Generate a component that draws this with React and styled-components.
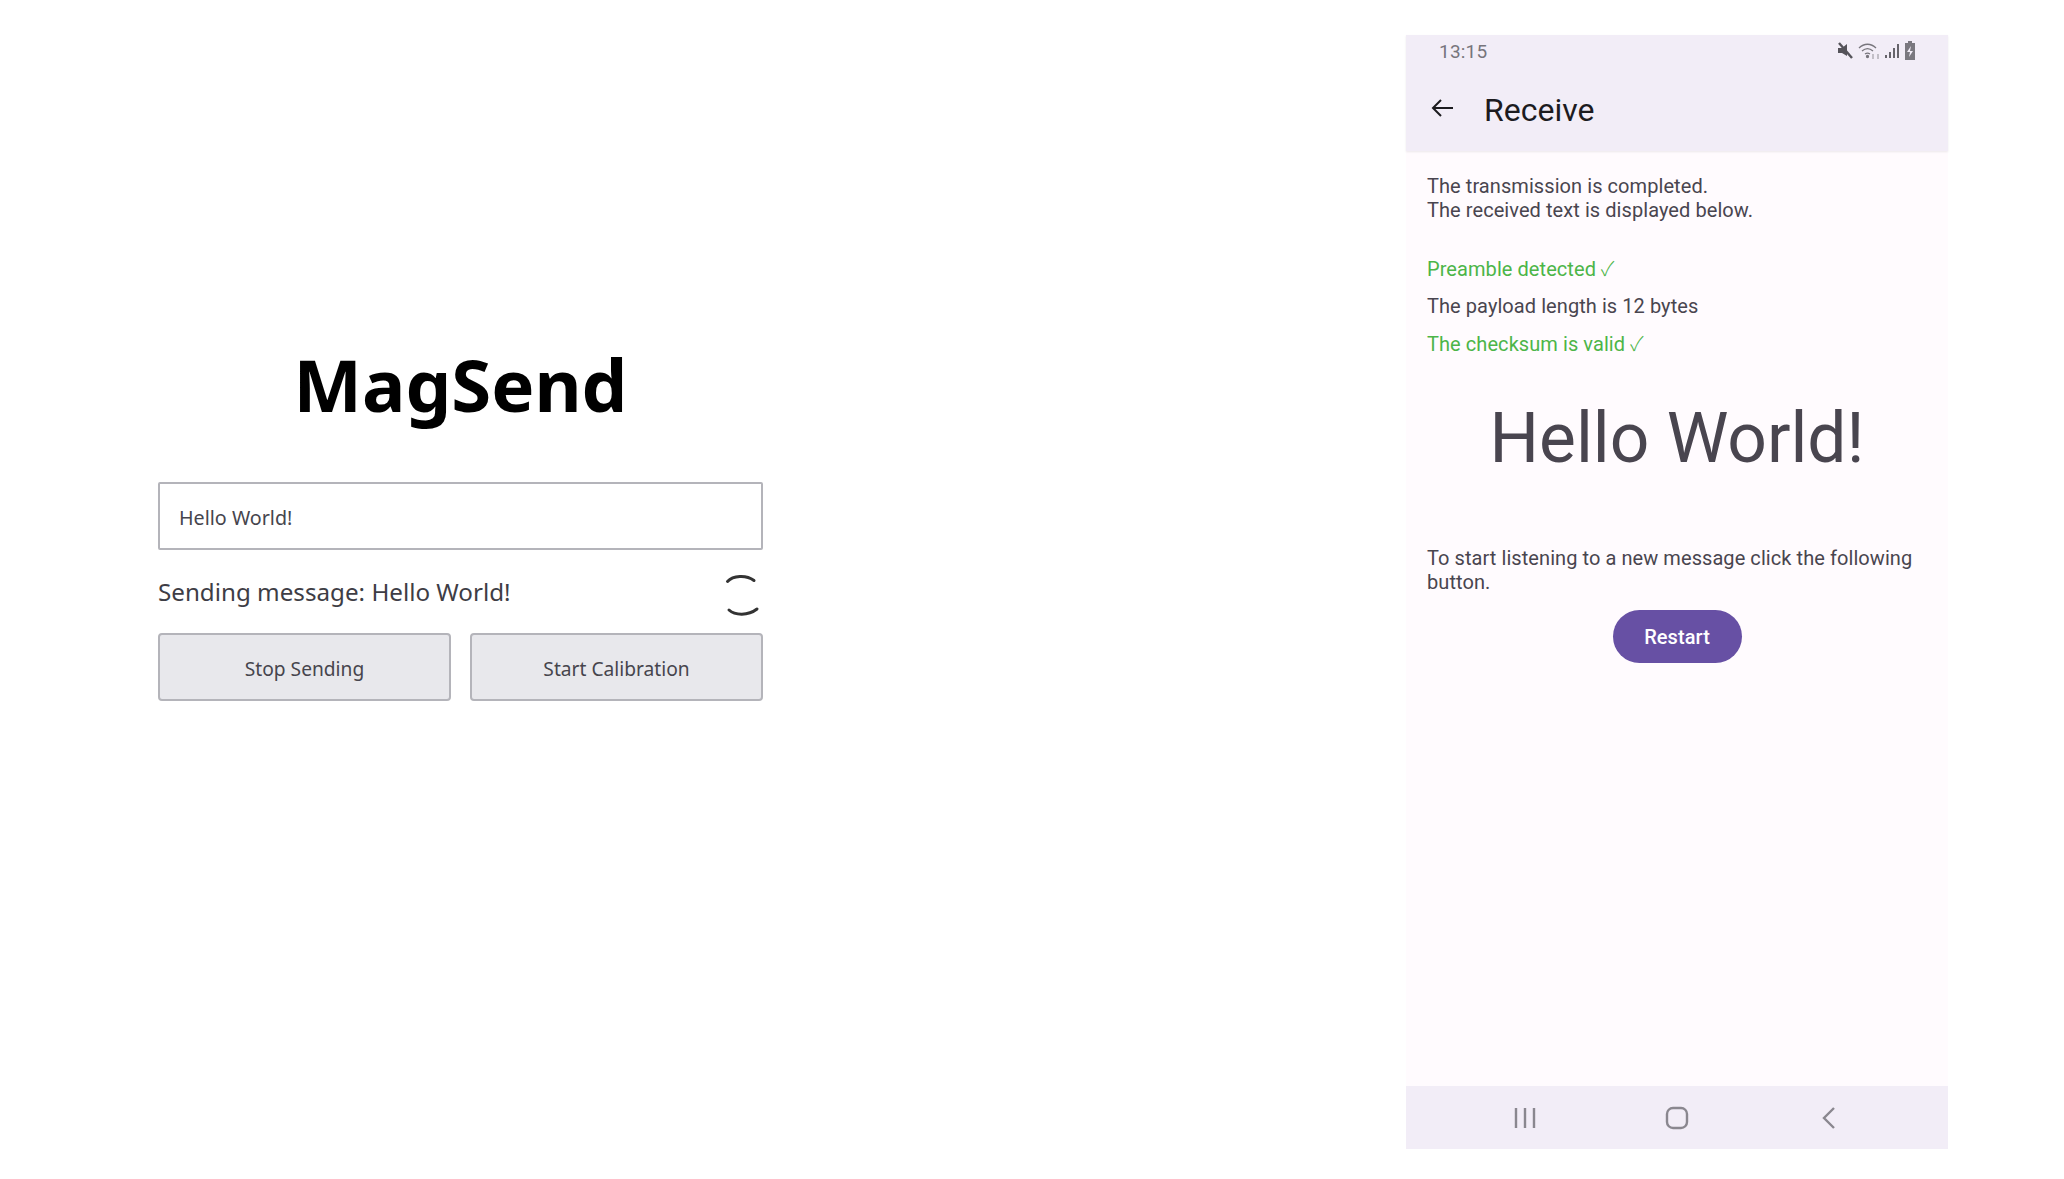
import React from "react";
import styled, { createGlobalStyle } from "styled-components";

const Global = createGlobalStyle`
  html, body { margin: 0; padding: 0; background: #fff; }
  * { box-sizing: border-box; }
`;

const Page = styled.div`
  width: 2064px;
  height: 1179px;
  display: flex;
  align-items: flex-start;
  overflow: hidden;
`;

const Sender = styled.section`
  width: 605px;
  margin-left: 158px;
  margin-top: 339px;
  display: flex;
  flex-direction: column;
  font-family: "Noto Sans", sans-serif;
`;

const Title = styled.h1`
  margin: 0 0 38px;
  height: 105px;
  font-size: 72.500px;
  line-height: 89px;
  font-weight: 700;
  text-align: center;
  color: #000;
`;

const MessageField = styled.div`
  height: 68px;
  border: 2px solid #b4b4ba;
  border-radius: 2px;
  padding: 2px 19px 0;
  display: flex;
  align-items: center;
  font-size: 19.700px;
  color: #46454d;
`;

const StatusRow = styled.div`
  height: 83px;
  display: flex;
  align-items: center;
  justify-content: space-between;
  font-size: 24.200px;
  color: #3e3d45;
`;

const Spinner = styled.svg`
  margin-top: 6px;
  margin-right: 1px;
`;

const ButtonRow = styled.div`
  display: grid;
  grid-template-columns: 1fr 1fr;
  gap: 19px;
`;

const GreyButton = styled.div`
  height: 68px;
  padding-top: 2px;
  border: 2px solid #b4b4ba;
  border-radius: 4px;
  background: #e8e8ec;
  display: flex;
  align-items: center;
  justify-content: center;
  font-size: 19.200px;
  color: #46454d;
`;

const Phone = styled.section`
  width: 542px;
  height: 1114px;
  margin-top: 35px;
  margin-left: 643px;
  display: flex;
  flex-direction: column;
  background: #fffbfe;
  font-family: Roboto, sans-serif;
  color: #49454f;
`;

const AppBar = styled.header`
  height: 116px;
  flex: none;
  background: #f2edf7;
  box-shadow: 0 1px 2px rgba(0, 0, 0, 0.08);
  display: flex;
  flex-direction: column;
`;

const StatusBar = styled.div`
  height: 32px;
  padding: 0 32px 0 33px;
  display: flex;
  align-items: center;
  justify-content: space-between;
  font-size: 19px;
  letter-spacing: 0.2px;
  color: #77757c;
`;

const StatusIcons = styled.div`
  display: flex;
  align-items: center;
  gap: 4px;
`;

const TitleRow = styled.div`
  flex: 1;
  padding: 0 0 2px 24px;
  display: flex;
  align-items: center;
  gap: 30px;
  font-size: 32px;
  color: #1c1b1f;
`;

const ScreenTitle = styled.span`
  padding-top: 4px;
`;

const Content = styled.main`
  flex: 1;
  padding: 23px 21px 0;
  display: flex;
  flex-direction: column;
  font-size: 20px;
  line-height: 24px;
  letter-spacing: 0.07px;
`;

const Paragraph = styled.p`
  margin: 0;
`;

const Checks = styled.div`
  margin-top: 34px;
  display: flex;
  flex-direction: column;
  gap: 13.500px;
`;

const Check = styled.div`
  height: 24px;
  color: ${(p) => (p.$ok ? "#4cb548" : "#49454f")};
`;

const Tick = styled.span`
  font-family: "Noto Sans CJK SC", "DejaVu Sans", sans-serif;
  font-size: 20px;
  font-weight: 300;
`;

const BigText = styled.div`
  margin-top: 36px;
  margin-bottom: 59px;
  height: 96px;
  font-size: 69.500px;
  letter-spacing: 0;
  line-height: 96px;
  text-align: center;
  color: #49454f;
`;

const RestartButton = styled.div`
  align-self: center;
  margin-top: 16px;
  width: 129px;
  height: 53px;
  padding-top: 1px;
  border-radius: 27px;
  background: #6750a4;
  color: #fff;
  display: flex;
  align-items: center;
  justify-content: center;
  font-size: 20px;
  font-weight: 500;
`;

const NavBar = styled.nav`
  height: 63px;
  flex: none;
  background: #f2edf7;
  display: grid;
  grid-template-columns: repeat(3, 152px);
  justify-content: center;
  justify-items: center;
  align-items: center;
`;

const App = () => (
  <Page>
    <Global />
    <Sender>
      <Title>MagSend</Title>
      <MessageField>Hello World!</MessageField>
      <StatusRow>
        <span>Sending message: Hello World!</span>
        <Spinner width="38" height="46" viewBox="0 0 38 46" fill="none" stroke="#333" strokeWidth="3" strokeLinecap="round">
          <path d="M3.500 9.500C9 3.500 22 2.500 30 8.500" />
          <path d="M5 38C11 43.500 24 44 33 37" />
        </Spinner>
      </StatusRow>
      <ButtonRow>
        <GreyButton>Stop Sending</GreyButton>
        <GreyButton>Start Calibration</GreyButton>
      </ButtonRow>
    </Sender>
    <Phone>
      <AppBar>
        <StatusBar>
          <span>13:15</span>
          <StatusIcons>
            <svg width="17" height="18" viewBox="0 0 17 18">
              <path d="M1 6h4l5-4v12l-5-3H1z" fill="#55535a" />
              <path d="M2 1l13 15" stroke="#55535a" strokeWidth="2.400" />
            </svg>
            <svg width="22" height="18" viewBox="0 0 22 18" fill="none" stroke="#77757c" strokeWidth="1.300">
              <path d="M1 6c5-5 12-5 17 0M4 9c3.500-3 7.500-3 11 0M7 12c2-1.500 3-1.500 5 0" />
              <circle cx="9.500" cy="14.500" r="1" fill="#77757c" />
              <path d="M15 12v5M20 12v5" stroke="#a9a7ae" />
            </svg>
            <svg width="16" height="18" viewBox="0 0 16 18" fill="#66646b">
              <rect x="1" y="13" width="2" height="3" />
              <rect x="5" y="10" width="2" height="6" />
              <rect x="9" y="6" width="2" height="10" />
              <rect x="13" y="2" width="2" height="14" />
            </svg>
            <svg width="12" height="20" viewBox="0 0 12 20">
              <path d="M4 0h4v2h3v17H1V2h3z" fill="#7a787f" />
              <path d="M7 5L3 11h3l-1 5 4-6H6z" fill="#f2edf7" />
            </svg>
          </StatusIcons>
        </StatusBar>
        <TitleRow>
          <svg width="24" height="24" viewBox="0 0 24 24" fill="none" stroke="#1c1b1f" strokeWidth="2">
            <path d="M23 12H3M11 4l-8 8 8 8" />
          </svg>
          <ScreenTitle>Receive</ScreenTitle>
        </TitleRow>
      </AppBar>
      <Content>
        <Paragraph>
          The transmission is completed.
          <br />
          The received text is displayed below.
        </Paragraph>
        <Checks>
          <Check $ok>Preamble detected <Tick>✓</Tick></Check>
          <Check>The payload length is 12 bytes</Check>
          <Check $ok>The checksum is valid <Tick>✓</Tick></Check>
        </Checks>
        <BigText>Hello World!</BigText>
        <Paragraph>To start listening to a new message click the following button.</Paragraph>
        <RestartButton>Restart</RestartButton>
      </Content>
      <NavBar>
        <svg width="22" height="24" viewBox="0 0 22 24" fill="none" stroke="#8a878f" strokeWidth="2.400">
          <path d="M2 2v20M11 2v20M20 2v20" />
        </svg>
        <svg width="24" height="24" viewBox="0 0 24 24" fill="none" stroke="#8a878f" strokeWidth="2.400">
          <rect x="2" y="2" width="20" height="20" rx="6" />
        </svg>
        <svg width="16" height="24" viewBox="0 0 16 24" fill="none" stroke="#8a878f" strokeWidth="2.400">
          <path d="M13 2L3 12l10 10" />
        </svg>
      </NavBar>
    </Phone>
  </Page>
);

export default App;
